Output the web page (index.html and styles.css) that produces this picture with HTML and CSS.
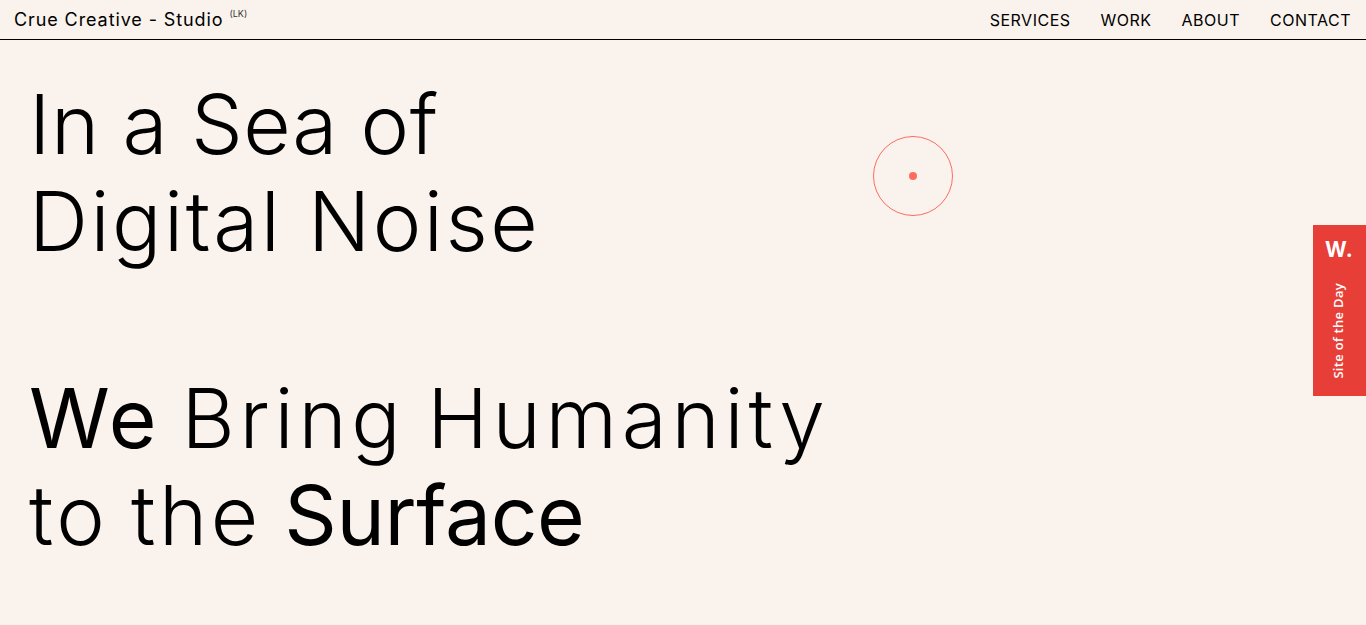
FILE: index.html
```html
<!DOCTYPE html>
<html lang="en">
<head>
    <meta charset="UTF-8">
    <meta name="viewport" content="width=device-width, initial-scale=1.0">
    <title>Crue Creative - Studio</title>
    <link rel="stylesheet" href="styles.css">
</head>
<body>
    <header class="topbar">
        <a class="brand" href="#">Crue Creative - Studio <sup class="brand-tag">(LK)</sup></a>
        <nav class="nav">
            <a href="#">SERVICES</a>
            <a href="#">WORK</a>
            <a href="#">ABOUT</a>
            <a href="#">CONTACT</a>
        </nav>
    </header>

    <main class="hero">
        <h1 class="headline">
            <span class="line line-sea">In a Sea of</span>
            <span class="line line-noise">Digital Noise</span>
        </h1>
        <h1 class="headline headline-second">
            <span class="line line-bring"><b class="bold-we">We</b> Bring Humanity</span>
            <span class="line line-the">to the <b class="bold-surface">Surface</b></span>
        </h1>
    </main>

    <!-- custom cursor -->
    <div class="cursor"><span class="cursor-dot"></span></div>

    <!-- awards ribbon -->
    <aside class="ribbon">
        <span class="ribbon-logo">W.</span>
        <span class="ribbon-text">Site of the Day</span>
    </aside>
</body>
</html>
```

FILE: styles.css
```css
html, body {
    height: 100%;
}

body {
    font-family: Inter, "Noto Sans", sans-serif;
    background-color: #faf2ed;
    color: #000;
    margin: 0;
    overflow: hidden;
    position: relative;
}

a {
    color: inherit;
    text-decoration: none;
}

.topbar {
    display: flex;
    justify-content: space-between;
    align-items: center;
    height: 39px;
    padding: 0 15px 0 14px;
    border-bottom: 1px solid #000;
}

.brand {
    font-size: 18px;
    letter-spacing: 0.9px;
}

.brand-tag {
    font-size: 9px;
    letter-spacing: 0;
    color: #333;
    vertical-align: 9px;
    line-height: 0;
}

.nav {
    display: flex;
    gap: 30px;
    font-size: 16px;
    letter-spacing: 0.5px;
}

.hero {
    padding: 36px 0 0 29px;
}

.headline {
    font-size: 82px;
    font-weight: 330;
    line-height: 97px;
    margin: 0;
}

.headline b {
    font-weight: 430;
}

.headline-second {
    margin-top: 100px;
}

.line {
    display: block;
}

.line-sea {
    letter-spacing: 0.6px;
    word-spacing: -1px;
}

.line-noise {
    letter-spacing: 2.5px;
}

.line-bring {
    letter-spacing: 4.7px;
    word-spacing: -6px;
}

.line-the {
    letter-spacing: 3.5px;
    word-spacing: -4px;
}

.bold-we {
    letter-spacing: 3.2px;
}

.bold-surface {
    letter-spacing: -0.4px;
}

.cursor {
    position: absolute;
    left: 873px;
    top: 136px;
    width: 78px;
    height: 78px;
    border: 1px solid #ff6b5f;
    border-radius: 50%;
    display: flex;
    align-items: center;
    justify-content: center;
}

.cursor-dot {
    width: 8px;
    height: 8px;
    border-radius: 50%;
    background: #ff6b5f;
}

.ribbon {
    position: absolute;
    right: 0;
    top: 225px;
    width: 53px;
    height: 171px;
    background: #e83e38;
    color: #fff;
    display: flex;
    flex-direction: column;
    align-items: center;
}

.ribbon-logo {
    font-size: 21px;
    font-weight: 700;
    letter-spacing: 1px;
    margin-top: 12px;
}

.ribbon-text {
    writing-mode: vertical-rl;
    transform: rotate(180deg);
    font-family: "Open Sans", sans-serif;
    font-size: 13px;
    font-weight: 600;
    letter-spacing: 0.3px;
    margin: 21px 3px 0 0;
}
```
